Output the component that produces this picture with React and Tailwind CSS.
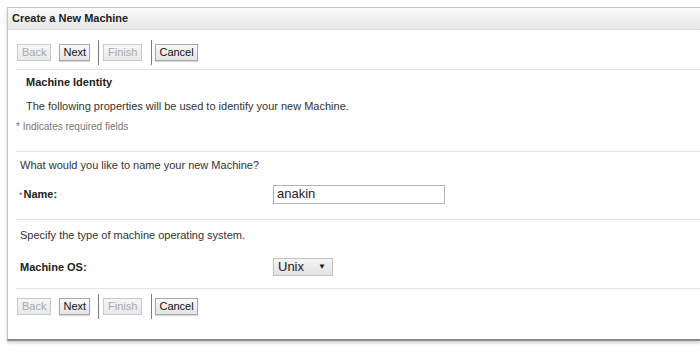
import React from "react";

const font = { fontFamily: '"Liberation Sans", Arial, sans-serif' };

function WizButton({ label, disabled }) {
  return (
    <button
      className={
        disabled
          ? "h-[17px] px-[4px] text-[11px] leading-none border border-[#c9c9c9] bg-gradient-to-b from-[#f6f6f6] to-[#e9e9e9] text-[#a9a9a9]"
          : "h-[17px] px-[3px] text-[11px] leading-none border border-[#a8a8a8] bg-gradient-to-b from-[#fafafa] to-[#e4e4e4] text-[#111] shadow-[0_1px_1px_rgba(0,0,0,0.15)]"
      }
    >
      {label}
    </button>
  );
}

function ButtonRow() {
  return (
    <div className="flex items-center h-[25px] pl-[9px]">
      <WizButton label="Back" disabled />
      <div className="w-[8px]" />
      <WizButton label="Next" />
      <div className="ml-[8px] mr-[4px] w-px h-[25px] bg-[#7a7a7a]" />
      <WizButton label="Finish" disabled />
      <div className="ml-[9px] mr-[3px] w-px h-[25px] bg-[#7a7a7a]" />
      <WizButton label="Cancel" />
    </div>
  );
}

function Rule() {
  return <div className="ml-[8px] border-t border-[#e4e4e4]" />;
}

export default function App() {
  return (
    <div className="h-[354px] w-[700px] bg-white pl-[7px] pt-[7px] text-[#333]" style={font}>
      <div className="h-[334px] border-l border-t border-[#c6c6c6] border-b-2 border-b-[#8c8c8c] shadow-[0_2px_3px_rgba(0,0,0,0.2)] flex flex-col">
        {/* header */}
        <div className="h-[22px] flex items-center pl-[4px] border-b border-[#dcdcdc] bg-gradient-to-b from-[#fafafa] to-[#e8e8e8]">
          <span className="text-[11px] font-bold text-[#222]">Create a New Machine</span>
        </div>

        <div className="pt-[10px]">
          <ButtonRow />
        </div>
        <div className="h-[4px]" />
        <Rule />

        {/* identity section */}
        <div className="h-[81px]">
          <div className="h-[25px] flex items-center pl-[18px] text-[11px] font-bold text-[#222]">
            Machine Identity
          </div>
          <div className="h-[22px] flex items-center pl-[18px] text-[11px] text-[#333]">
            The following properties will be used to identify your new Machine.
          </div>
          <div className="h-[18px] flex items-center pl-[8px] text-[10px] text-[#777]">
            * Indicates required fields
          </div>
        </div>
        <Rule />

        {/* name */}
        <div className="h-[67px]">
          <div className="h-[26px] flex items-center pl-[12px] text-[11px] text-[#333]">
            What would you like to name your new Machine?
          </div>
          <div className="flex items-center h-[32px]">
            <div className="w-[265px] pl-[11px] text-[11px] font-bold text-[#222]">
              <span className="text-[9px] font-normal text-[#666] mr-[1px]">*</span>Name:
            </div>
            <div className="h-[19px] w-[172px] border border-[#b4b4b4] pl-[3px] flex items-center text-[13px] text-[#222]">
              anakin
            </div>
          </div>
        </div>
        <Rule />

        {/* os */}
        <div className="h-[68px]">
          <div className="h-[31px] flex items-center pl-[12px] text-[11px] text-[#333]">
            Specify the type of machine operating system.
          </div>
          <div className="flex items-center h-[32px]">
            <div className="w-[265px] pl-[12px] text-[11px] font-bold text-[#222]">Machine OS:</div>
            <div className="h-[18px] w-[60px] border border-[#c2c2c2] bg-gradient-to-b from-[#f6f6f6] to-[#e2e2e2] flex items-center justify-between pl-[4px] pr-[6px] text-[13px] text-[#222]">
              <span>Unix</span>
              <span className="text-[8px]">▼</span>
            </div>
          </div>
        </div>
        <Rule />

        <div className="pt-[5px]">
          <ButtonRow />
        </div>
      </div>
    </div>
  );
}
